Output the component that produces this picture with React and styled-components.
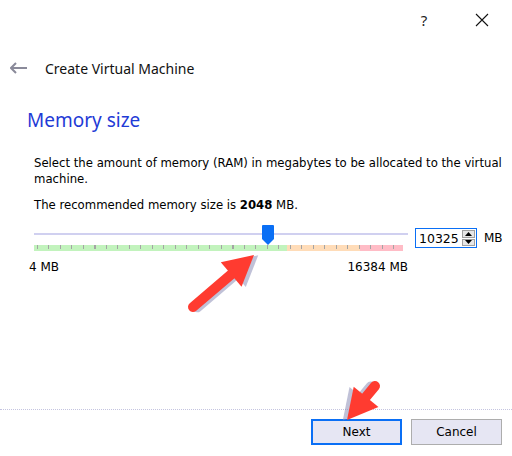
import styled, { createGlobalStyle } from 'styled-components'

const GlobalStyle = createGlobalStyle`
  html, body {
    margin: 0;
    padding: 0;
    background: #ffffff;
  }
  #root {
    height: 100vh;
  }
`;

const MIN_MB = 4;
const MAX_MB = 16384;
const VALUE_MB = 10325;

// Red annotation arrows drawn over the dialog
function RedArrow({ x1, y1, x2, y2, head = 24, half = 14 }) {
  const dx = x2 - x1;
  const dy = y2 - y1;
  const len = Math.sqrt(dx * dx + dy * dy);
  const ang = (Math.atan2(dy, dx) * 180) / Math.PI;
  const shaftEnd = len - head + 2;
  return (
    <g transform={`translate(${x1} ${y1}) rotate(${ang})`}>
      <g transform="translate(3 3)" opacity="0.55">
        <line x1="0" y1="0" x2={shaftEnd} y2="0" stroke="#8d8fb8" strokeWidth="10" strokeLinecap="round" />
        <polygon points={`${len},0 ${len - head},${-half} ${len - head},${half}`} fill="#8d8fb8" />
      </g>
      <line x1="0" y1="0" x2={shaftEnd} y2="0" stroke="#ff3b30" strokeWidth="10" strokeLinecap="round" />
      <polygon points={`${len},0 ${len - head},${-half} ${len - head},${half}`} fill="#ff3b30" strokeLinejoin="round" />
    </g>
  );
}

export default function App() {
  const ratio = (VALUE_MB - MIN_MB) / (MAX_MB - MIN_MB);

  return (
    <>
      <GlobalStyle />
      <Dialog>
        <TitleBar>
          <TitleButton>?</TitleButton>
          <TitleButton>
            <svg width="14" height="14" viewBox="0 0 14 14">
              <path d="M1 1 L13 13 M13 1 L1 13" stroke="#111" strokeWidth="1.1" />
            </svg>
          </TitleButton>
        </TitleBar>

        <Header>
          <BackIcon>
            <svg width="18" height="12" viewBox="0 0 18 12">
              <path d="M1 6 H17 M6 1 L1 6 L6 11" stroke="#8a8a9a" strokeWidth="2" fill="none" />
            </svg>
          </BackIcon>
          <HeaderText>Create Virtual Machine</HeaderText>
        </Header>

        <Body>
          <PageTitle>Memory size</PageTitle>
          <Paragraph>
            Select the amount of memory (RAM) in megabytes to be allocated to the virtual machine.
          </Paragraph>
          <Paragraph $gap={10}>
            The recommended memory size is <b>2048</b> MB.
          </Paragraph>

          <SliderRow>
            <SliderArea>
              <Track />
              <Ticks />
              <Thumb style={{ left: `calc(${(ratio * 100).toFixed(2)}% - 8px)` }}>
                <svg width="12" height="20" viewBox="0 0 12 20">
                  <path d="M0 1 Q0 0 1 0 H11 Q12 0 12 1 V14 L6 20 L0 14 Z" fill="#0a6ff5" />
                </svg>
              </Thumb>
            </SliderArea>
            <SpinBox>
              <SpinValue>{VALUE_MB}</SpinValue>
              <Spinner>
                <SpinButton>
                  <svg width="7" height="4" viewBox="0 0 7 4"><path d="M0 4 L3.5 0 L7 4 Z" fill="#000" /></svg>
                </SpinButton>
                <SpinButton>
                  <svg width="7" height="4" viewBox="0 0 7 4"><path d="M0 0 L3.5 4 L7 0 Z" fill="#000" /></svg>
                </SpinButton>
              </Spinner>
            </SpinBox>
            <Unit>MB</Unit>
          </SliderRow>

          <ScaleLabels>
            <span>{MIN_MB} MB</span>
            <span>{MAX_MB} MB</span>
          </ScaleLabels>
        </Body>

        <Footer>
          <Button $primary>Next</Button>
          <Button>Cancel</Button>
        </Footer>

        <Annotations width="512" height="456" viewBox="0 0 512 456">
          <RedArrow x1={193} y1={307} x2={254} y2={255} head={30} half={16} />
          <RedArrow x1={375} y1={386} x2={347} y2={420} head={30} half={16} />
        </Annotations>
      </Dialog>
    </>
  );
}

const Dialog = styled.div`
  position: relative;
  height: 100%;
  display: flex;
  flex-direction: column;
  background: #fff;
  font-family: "DejaVu Sans", Tahoma, sans-serif;
  font-size: 11.7px;
  color: #000;
  overflow: hidden;
`;

const TitleBar = styled.div`
  height: 40px;
  display: flex;
  justify-content: flex-end;
  align-items: center;
  padding-right: 1px;
`;

const TitleButton = styled.div`
  width: 58px;
  height: 40px;
  display: flex;
  align-items: center;
  justify-content: center;
  font-family: "Noto Sans", sans-serif;
  font-size: 15px;
  color: #222;
`;

const Header = styled.div`
  height: 36px;
  margin-top: 10px;
  display: flex;
  align-items: center;
  padding-left: 10px;
`;

const BackIcon = styled.div`
  width: 35px;
  display: flex;
  align-items: center;
`;

const HeaderText = styled.div`
  font-family: "Noto Sans", sans-serif;
  font-size: 14px;
  color: #111;
`;

const Body = styled.div`
  flex: 1;
  padding: 0 0 0 34px;
`;

const PageTitle = styled.h1`
  margin: 22px 0 23px -7px;
  font-family: "Noto Sans", sans-serif;
  font-weight: 400;
  font-size: 19px;
  line-height: 24px;
  color: #1f3bd6;
`;

const Paragraph = styled.p`
  margin: ${p => p.$gap || 0}px 6px 0 0;
  line-height: 16px;
  b {
    font-weight: 700;
  }
`;

const SliderRow = styled.div`
  margin-top: 13px;
  display: flex;
  align-items: flex-start;
`;

const SliderArea = styled.div`
  position: relative;
  width: 374px;
  height: 28px;
`;

const Track = styled.div`
  margin-top: 7px;
  height: 2px;
  background: #d0d0f0;
`;

const Ticks = styled.div`
  margin-top: 10px;
  width: 369px;
  height: 6px;
  background:
    repeating-linear-gradient(to right, #a4a4a4 0 1px, transparent 1px 11.5px) 3px 0 / 100% 4px no-repeat,
    linear-gradient(to right, #c2f3bd 0 68.6%, #ffdcb8 68.6% 88.4%, #ffbcc6 88.4% 100%);
`;

const Thumb = styled.div`
  position: absolute;
  top: -1px;
  width: 12px;
  height: 20px;
  line-height: 0;
`;

const SpinBox = styled.div`
  margin: 2px 0 0 7px;
  width: 60px;
  height: 18px;
  border: 1px solid #0a6ff5;
  display: flex;
  align-items: center;
  justify-content: space-between;
  font-size: 12.5px;
`;

const SpinValue = styled.span`
  padding-left: 3px;
`;

const Spinner = styled.div`
  width: 13px;
  height: 16px;
  margin-right: 1px;
  display: flex;
  flex-direction: column;
  gap: 1px;
`;

const SpinButton = styled.div`
  flex: 1;
  background: #e6e6e6;
  border: 1px solid #a0a0a0;
  display: flex;
  align-items: center;
  justify-content: center;
`;

const Unit = styled.span`
  margin: 5px 0 0 7px;
  font-size: 12px;
`;

const ScaleLabels = styled.div`
  width: 379px;
  margin: 6px 0 0 -5px;
  display: flex;
  justify-content: space-between;
  font-size: 12px;
`;

const Footer = styled.div`
  box-sizing: border-box;
  height: 47px;
  border-top: 1px dotted #c4c4e0;
  display: flex;
  justify-content: flex-end;
  align-items: flex-start;
  gap: 9px;
  padding: 9px 10px 0 0;
`;

const Button = styled.button`
  width: 91px;
  height: 26px;
  box-sizing: border-box;
  font-family: "DejaVu Sans", Tahoma, sans-serif;
  font-size: 12px;
  color: #000;
  background: #e6e6f3;
  border: ${p => (p.$primary ? '2px solid #0a6ff5' : '1px solid #adadad')};
  padding: 0;
`;

const Annotations = styled.svg`
  position: absolute;
  left: 0;
  top: 0;
  pointer-events: none;
`;
